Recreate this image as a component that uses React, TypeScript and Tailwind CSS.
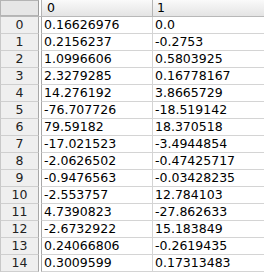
import React from 'react';

const rows: [string, string][] = [
  ['0.16626976', '0.0'],
  ['0.2156237', '-0.2753'],
  ['1.0996606', '0.5803925'],
  ['2.3279285', '0.16778167'],
  ['14.276192', '3.8665729'],
  ['-76.707726', '-18.519142'],
  ['79.59182', '18.370518'],
  ['-17.021523', '-3.4944854'],
  ['-2.0626502', '-0.47425717'],
  ['-0.9476563', '-0.03428235'],
  ['-2.553757', '12.784103'],
  ['4.7390823', '-27.862633'],
  ['-2.6732922', '15.183849'],
  ['0.24066806', '-0.2619435'],
  ['0.3009599', '0.17313483'],
];

export default function App() {
  return (
    <div className="w-[264px] h-[272px] overflow-hidden bg-white text-[12.5px] leading-none text-black font-['DejaVu_Sans',sans-serif]">
      <div className="flex h-[17px] bg-gradient-to-b from-[#fafafa] to-[#e4e4e4] border-b border-[#b8b8b8]">
        <div className="w-[39px] shrink-0 bg-[#e6e6e6] border border-[#b4b4b4] border-r-[#9c9c9c]" />
        <div className="w-[2px] shrink-0 bg-white" />
        <div className="w-[112px] shrink-0 flex items-center pl-[5px] border-l border-r border-[#b4b4b4]">0</div>
        <div className="flex-1 flex items-center pl-[4px]">1</div>
      </div>
      {rows.map(([a, b], i) => (
        <div key={i} className="flex h-[17px]">
          <div className="w-[39px] shrink-0 flex items-center justify-center bg-[#efefef] border-l border-b border-r border-l-[#c8c8c8] border-b-[#cfcfcf] border-r-[#a8a8a8] text-[#222]">
            {i}
          </div>
          <div className="w-[2px] shrink-0 bg-white" />
          <div className="w-[112px] shrink-0 flex items-center pl-[2px] border-l border-r border-b border-l-[#a8a8a8] border-r-[#d4d4d4] border-b-[#d4d4d4]">
            {a}
          </div>
          <div className="flex-1 flex items-center pl-[2px] border-b border-[#d4d4d4]">{b}</div>
        </div>
      ))}
    </div>
  );
}
